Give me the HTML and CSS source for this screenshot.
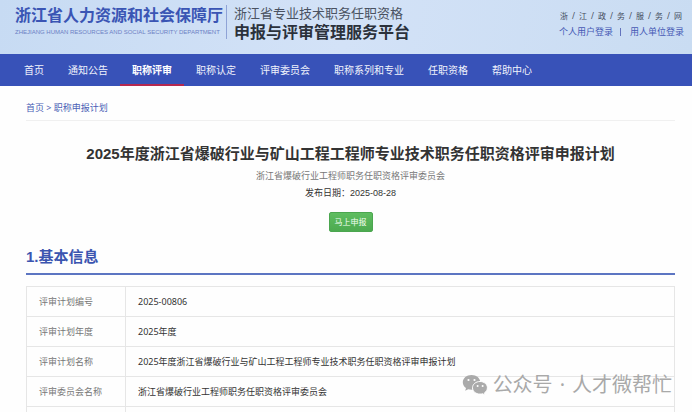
FILE: index.html
```html
<!DOCTYPE html>
<html lang="zh-CN">
<head>
<meta charset="utf-8">
<title>浙江省专业技术职务任职资格申报与评审管理服务平台</title>
<link rel="stylesheet" href="styles.css">
</head>
<body>
<header class="banner">
  <div class="department">
    <div class="department-name">浙江省人力资源和社会保障厅</div>
    <div class="department-en">ZHEJIANG HUMAN RESOURCES AND SOCIAL SECURITY DEPARTMENT</div>
  </div>
  <div class="platform">
    <div class="platform-scope">浙江省专业技术职务任职资格</div>
    <div class="platform-name">申报与评审管理服务平台</div>
  </div>
  <div class="account">
    <a class="gov-link" href="#"><span>浙</span><span>/</span><span>江</span><span>/</span><span>政</span><span>/</span><span>务</span><span>/</span><span>服</span><span>/</span><span>务</span><span>/</span><span>网</span></a>
    <div class="logins"><a href="#">个人用户登录</a><span class="bar"></span><a href="#">用人单位登录</a></div>
  </div>
</header>
<nav class="menu">
  <a href="#">首页</a>
  <a href="#">通知公告</a>
  <a class="current" href="#">职称评审</a>
  <a href="#">职称认定</a>
  <a href="#">评审委员会</a>
  <a href="#">职称系列和专业</a>
  <a href="#">任职资格</a>
  <a href="#">帮助中心</a>
</nav>
<main class="content">
  <div class="crumbs"><a href="#">首页</a> &gt; <a href="#">职称申报计划</a></div>
  <section class="intro">
    <h1>2025年度浙江省爆破行业与矿山工程工程师专业技术职务任职资格评审申报计划</h1>
    <p class="committee">浙江省爆破行业工程师职务任职资格评审委员会</p>
    <p class="date">发布日期：2025-08-28</p>
    <button class="apply" type="button">马上申报</button>
  </section>
  <h2>1.基本信息</h2>
  <table class="info">
    <tbody>
      <tr><th scope="row">评审计划编号</th><td>2025-00806</td></tr>
      <tr><th scope="row">评审计划年度</th><td>2025年度</td></tr>
      <tr><th scope="row">评审计划名称</th><td>2025年度浙江省爆破行业与矿山工程工程师专业技术职务任职资格评审申报计划</td></tr>
      <tr><th scope="row">评审委员会名称</th><td>浙江省爆破行业工程师职务任职资格评审委员会</td></tr>
      <tr><th scope="row"></th><td></td></tr>
    </tbody>
  </table>
</main>
<div class="watermark">
  <svg viewBox="0 0 26 22" width="26" height="22" aria-hidden="true">
    <path class="bubble" d="M9.500 1C4.500 1 .8 4.200.8 8.300c0 2.400 1.200 4.400 3.200 5.800l-.8 2.700 3-1.600c1 .3 2.200.5 3.300.5 5 0 8.800-3.200 8.800-7.400S14.500 1 9.500 1z"/>
    <path class="bubble front" d="M18 7.500c-4.200 0-7.500 2.800-7.500 6.300s3.300 6.300 7.500 6.300c.9 0 1.800-.1 2.600-.4l2.500 1.400-.6-2.300c1.800-1.200 2.900-3 2.900-5 0-3.500-3.200-6.300-7.400-6.300z"/>
    <g class="eye"><circle cx="6.500" cy="6" r="1.100"/><circle cx="12.500" cy="6" r="1.100"/><circle cx="15.600" cy="12" r="1"/><circle cx="20.600" cy="12" r="1"/></g>
  </svg>
  <div class="watermark-text"><span>公众号</span> <span>·</span> <span>人才微帮忙</span></div>
</div>
</body>
</html>
```
FILE: styles.css
```css
* { box-sizing: border-box; }

html { overflow: hidden; height: 100%; }

body {
  position: relative;
  height: 100%;
  margin: 0;
  overflow: hidden;
  background: #fefefe;
  color: #333;
  font: 9px/16px "Noto Sans", "Noto Sans CJK SC", sans-serif;
}

a { color: inherit; text-decoration: none; }

.banner {
  display: flex;
  height: 54px;
  padding: 5px 8px 0 15px;
  background: linear-gradient(100deg, #c7dbf3, #d3e2f7 50%, #c9dcf2);
}

.department {
  padding-right: 3px;
  color: #3a55b4;
  white-space: nowrap;
}

.department-name {
  font-size: 16px;
  line-height: 20px;
  font-weight: 700;
}

.department-en {
  color: #6c80c4;
  font-family: "Liberation Sans", sans-serif;
  font-size: 6px;
  line-height: 15px;
}

.platform {
  height: 34px;
  padding-left: 7px;
  border-left: 1px solid #8fa3d6;
  color: #2b313b;
  white-space: nowrap;
}

.platform-scope {
  color: #4a5261;
  font-size: 13px;
  line-height: 16px;
}

.platform-name {
  font-family: "Noto Sans CJK SC", sans-serif;
  font-size: 16px;
  line-height: 20px;
  font-weight: 700;
}

.account {
  display: flex;
  flex-direction: column;
  align-items: flex-end;
  margin-left: auto;
  padding-top: 3px;
  white-space: nowrap;
}

.gov-link {
  display: flex;
  gap: 4px;
  padding-right: 2px;
  color: #444c5b;
  font-size: 8px;
}

.logins {
  display: flex;
  align-items: center;
  color: #4659b5;
}

.bar {
  width: 1px;
  height: 8px;
  margin: 0 9px 0 7px;
  background: #6373bd;
}

.menu {
  display: flex;
  height: 32px;
  padding-left: 12px;
  background: #3852b8;
  color: #f0f3fc;
  font-size: 10px;
  line-height: 32px;
  white-space: nowrap;
}

.menu a { padding: 0 12px; }

.menu .current {
  border-bottom: 2px solid #b52850;
  color: #fff;
  font-weight: 700;
}

.content { padding: 14px 17px 0 26px; }

.crumbs {
  padding-bottom: 4px;
  border-bottom: 1px solid #f0f0f0;
  color: #4a5fb5;
}

.intro {
  padding-top: 22px;
  text-align: center;
}

h1 {
  margin: 0 0 3px;
  font-family: "Liberation Sans", "Noto Sans CJK SC", sans-serif;
  font-size: 15px;
  line-height: 22px;
  white-space: nowrap;
}

.committee,
.date { margin: 0; }

.committee { color: #777; }

.date {
  padding-top: 1px;
  font-family: "Liberation Sans", "Noto Sans CJK SC", sans-serif;
}

.apply {
  display: block;
  height: 20px;
  margin: 11px auto 0;
  padding: 0 5px;
  border: 1px solid #4ba64f;
  border-radius: 2px;
  background: linear-gradient(#5fbd60, #4caa50);
  color: #f3fff3;
  font: 8px/16px "Noto Sans CJK SC", sans-serif;
}

h2 {
  margin: 13px 0 11px;
  padding-bottom: 4px;
  border-bottom: 2px solid #5c75c2;
  color: #3b55b0;
  font-family: "Liberation Sans", "Noto Sans CJK SC", sans-serif;
  font-size: 15px;
  line-height: 24px;
}

.info {
  width: 100%;
  border-collapse: collapse;
}

.info th,
.info td {
  height: 30px;
  padding: 0 12px;
  border: 1px solid #e6e6e6;
  text-align: left;
}

.info th {
  width: 99px;
  color: #777;
  font-weight: 400;
  white-space: nowrap;
}

.watermark {
  position: absolute;
  right: 20px;
  bottom: 14px;
  display: flex;
  align-items: center;
  gap: 5px;
  color: #a9a9a9;
  font-size: 20px;
  line-height: 26px;
  white-space: nowrap;
}

.watermark-text {
  display: flex;
  gap: 7px;
}

.bubble { fill: #aaa; }

.front { stroke: #fefefe; stroke-width: 1; }

.eye { fill: #fefefe; }
```
